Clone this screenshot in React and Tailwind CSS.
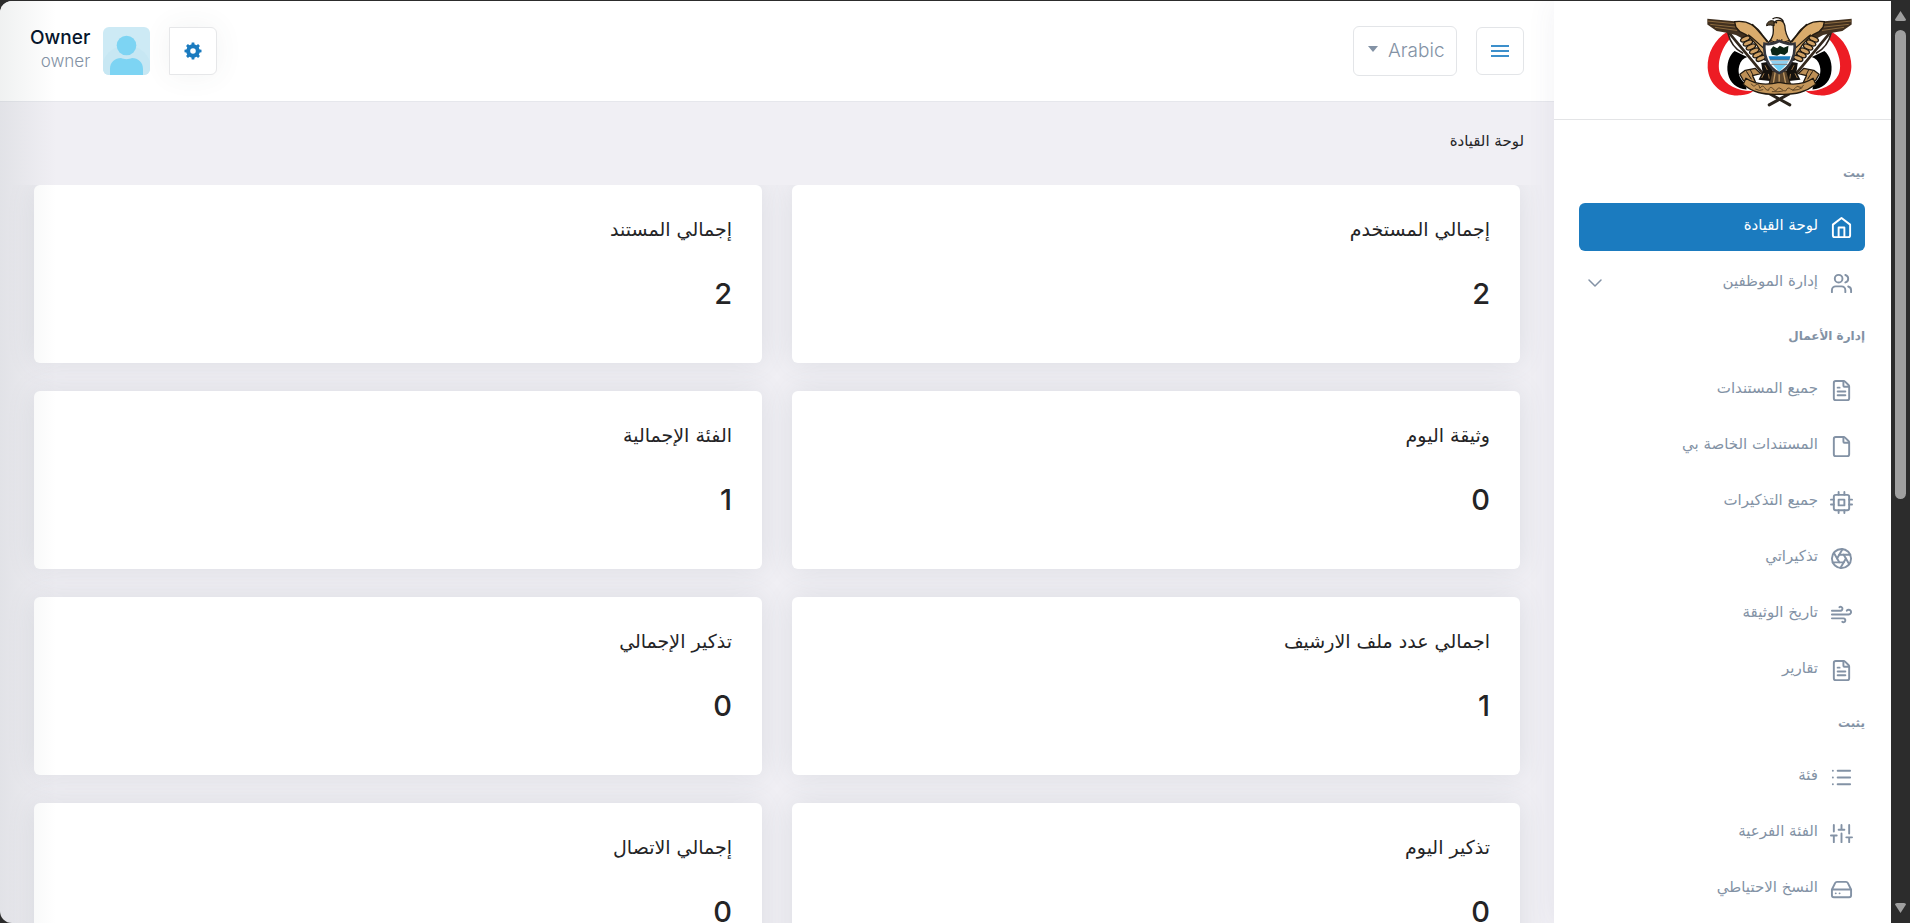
import { useState } from "react";
import { Users, FileText, File, Aperture, Wind, List, ChevronDown } from "lucide-react";

function LineIcon({ size = 23, strokeWidth = 2, children }) {
  return (
    <svg
      width={size}
      height={size}
      viewBox="0 0 24 24"
      fill="none"
      stroke="currentColor"
      strokeWidth={strokeWidth}
      strokeLinecap="round"
      strokeLinejoin="round"
      aria-hidden="true"
    >
      {children}
    </svg>
  );
}

function Sliders(props) {
  return (
    <LineIcon {...props}>
      <path d="M4 21v-7M4 10V3M12 21v-9M12 8V3M20 21v-5M20 12V3M1 14h6M9 8h6M17 16h6" />
    </LineIcon>
  );
}

function Drive(props) {
  return (
    <LineIcon {...props}>
      <path d="M22 12H2M5.45 5.11 2 12v6a2 2 0 0 0 2 2h16a2 2 0 0 0 2-2v-6l-3.45-6.89A2 2 0 0 0 16.76 4H7.24a2 2 0 0 0-1.79 1.11zM6 16h.01M10 16h.01" />
    </LineIcon>
  );
}

function Home(props) {
  return (
    <LineIcon {...props}>
      <path d="m3 9 9-7 9 7v11a2 2 0 0 1-2 2H5a2 2 0 0 1-2-2z" />
      <path d="M9 22V12h6v10" />
    </LineIcon>
  );
}

function Chip(props) {
  return (
    <LineIcon {...props}>
      <rect x="4" y="4" width="16" height="16" rx="2" />
      <path d="M9 9h6v6H9zM9 1v3M15 1v3M9 20v3M15 20v3M20 9h3M20 14h3M1 9h3M1 14h3" />
    </LineIcon>
  );
}

function Bars() {
  return (
    <svg width="18" height="14" viewBox="0 0 18 14" aria-hidden="true">
      <path d="M0 1h18v2H0zM0 6h18v2H0zM0 11h18v2H0z" fill="currentColor" />
    </svg>
  );
}

function Cog() {
  return (
    <svg width="18" height="18" viewBox="0 0 18 18" aria-hidden="true">
      <circle cx="9" cy="9" r="4.8" fill="none" stroke="currentColor" strokeWidth="4" />
      {[0, 45, 90, 135].map((angle) => (
        <path
          key={angle}
          d="M7.300 3.500 7.700 0.500H10.300L10.700 3.500ZM7.300 14.500 7.700 17.500H10.300L10.700 14.500Z"
          transform={`rotate(${angle} 9 9)`}
          fill="currentColor"
        />
      ))}
    </svg>
  );
}

const sections = [
  {
    title: "بيت",
    items: [
      { label: "لوحة القيادة", icon: Home, active: true },
      { label: "إدارة الموظفين", icon: Users, expandable: true },
    ],
  },
  {
    title: "إدارة الأعمال",
    items: [
      { label: "جميع المستندات", icon: FileText },
      { label: "المستندات الخاصة بي", icon: File },
      { label: "جميع التذكيرات", icon: Chip },
      { label: "تذكيراتي", icon: Aperture },
      { label: "تاريخ الوثيقة", icon: Wind },
      { label: "تقارير", icon: FileText },
    ],
  },
  {
    title: "يثبت",
    items: [
      { label: "فئة", icon: List },
      { label: "الفئة الفرعية", icon: Sliders },
      { label: "النسخ الاحتياطي", icon: Drive },
    ],
  },
];

const stats = [
  { label: "إجمالي المستخدم", value: 2 },
  { label: "إجمالي المستند", value: 2 },
  { label: "وثيقة اليوم", value: 0 },
  { label: "الفئة الإجمالية", value: 1 },
  { label: "اجمالي عدد ملف الارشيف", value: 1 },
  { label: "تذكير الإجمالي", value: 0 },
  { label: "تذكير اليوم", value: 0 },
  { label: "إجمالي الاتصال", value: 0 },
];

const wingFeathers = [
  [166, 104],
  [174, 116],
  [183, 128],
  [193, 140],
  [203, 151],
  [213, 162],
];

function EmblemHalf() {
  return (
    <g strokeLinejoin="round" strokeLinecap="round">
      <path d="M112 82C74 104 51 148 53 190C56 244 104 278 152 273C168 271 182 268 190 260C146 262 108 244 92 212C78 180 94 132 120 104Z" fill="#ed1c24" />
      <path d="M134 140C118 152 108 180 114 208C120 236 140 252 170 256L166 236C150 226 142 206 148 184C152 170 160 162 172 158Z" fill="#000" />
      <path d="M114 86C120 112 136 134 158 146" stroke="#2b2119" strokeWidth="5" fill="none" />
      <path d="M118 86L226 216" stroke="#33281d" strokeWidth="8" fill="none" />
      <path d="M52 43L150 52L176 62L196 100L160 104L138 92L106 84L80 80L52 60Z" fill="#41301f" />
      <path d="M54 50L138 58M62 60L136 68M76 69L140 78" stroke="#8c6a3f" strokeWidth="3" fill="none" />
      <path d="M134 52C176 46 200 66 218 92L236 114L226 168L212 140C196 112 176 92 150 82L138 68Z" fill="#d9ab6c" stroke="#221a10" strokeWidth="4" />
      <path d="M188 60C204 76 218 96 232 112M176 92C192 104 206 118 222 132" stroke="#221a10" strokeWidth="4" fill="none" />
      {wingFeathers.map(([x, y]) => (
        <ellipse key={x} cx={x} cy={y} rx="15" ry="7" transform={`rotate(-24 ${x} ${y})`} fill="#cfa064" stroke="#221a10" strokeWidth="4" />
      ))}
      <path d="M214 176L236 172L254 212L240 230L206 226L218 202Z" fill="#15110d" />
      <path d="M226 184l6 12M222 208l-6 12M236 210l2 12" stroke="#9c7647" strokeWidth="3" />
      <path d="M166 198L196 192L212 208L188 214L198 236L160 228L150 210Z" fill="#bd8f56" stroke="#221a10" strokeWidth="4" />
      <path d="M170 202L184 224M182 198L190 214" stroke="#221a10" strokeWidth="3" />
    </g>
  );
}

function Emblem() {
  return (
    <svg viewBox="51 38 436 270" className="h-[90px] w-[145px]" role="img" aria-label="شعار">
      <EmblemHalf />
      <g transform="translate(538 0) scale(-1 1)">
        <EmblemHalf />
      </g>
      <path d="M296 270L238 302M242 270L300 302" stroke="#2b241c" strokeWidth="9" strokeLinecap="round" />
      <path d="M247 200L290 200L304 246L236 246Z" fill="#5b452c" stroke="#1b140c" strokeWidth="3" />
      <path d="M256 204L250 240M268 204V240M281 204L288 240" stroke="#c39a63" strokeWidth="4" />
      <path d="M250 62C254 44 280 42 285 64C286 84 290 96 302 112L270 122L238 112C250 98 252 86 250 70Z" fill="#d9ab6c" stroke="#221a10" strokeWidth="4" strokeLinejoin="round" />
      <path d="M252 50C240 46 230 54 230 64C238 60 246 62 253 64Z" fill="#55452f" stroke="#1b140c" strokeWidth="3" />
      <circle cx="259" cy="54" r="3" fill="#111" />
      <path d="M248 44C258 36 276 40 281 52" stroke="#1b140c" strokeWidth="4" fill="none" />
      <path d="M242 108L268 118L298 108M262 104v10M276 104v10" stroke="#1b140c" strokeWidth="3" fill="none" />
      <path d="M224 118C240 122 256 116 268 110C282 116 298 122 314 118C318 150 304 190 268 206C232 190 220 150 224 118Z" fill="#fff" stroke="#34343a" strokeWidth="8" />
      <path d="M242 136L250 126L262 132L270 124L282 130L296 124L294 144L284 152L272 148L262 154L246 151Z" fill="#0b2415" />
      <path d="M236 156H302L299 166H240Z" fill="#1b7fc0" />
      <path d="M242 170H297L291 178H248Z" fill="#8ed0f2" />
      <path d="M250 182H289L268 202Z" fill="#6fcdf4" />
      <path d="M240 167H299M244 180H293" stroke="#1d2a33" strokeWidth="2" />
      <path d="M168 222C200 244 236 242 268 234C302 242 338 244 370 222L378 240C350 262 320 272 268 270C218 272 188 264 160 240Z" fill="#c4965a" stroke="#221a10" strokeWidth="4" strokeLinejoin="round" />
      <path d="M184 238q6 12 14 4t12 10q8-12 14-2t12 8q4-14 12-6t10 8q8-14 16-6t14 6q6-14 14-6t14-2q6-10 12-4t14-6" stroke="#5c4426" strokeWidth="3" fill="none" />
      <path d="M196 254q14 8 24 2M246 262q20 2 34-2M308 258q20 0 30-8" stroke="#5c4426" strokeWidth="3" fill="none" />
    </svg>
  );
}

function NavItem({ item }) {
  const Icon = item.icon;
  return (
    <li>
      <a
        href="#"
        aria-current={item.active ? "page" : undefined}
        className={
          item.active
            ? "flex h-12 items-center gap-3 rounded-md bg-[#1b7bbf] ps-3 pe-1 text-white"
            : "flex h-12 items-center gap-3 rounded-md ps-3 pe-1 text-[#8392a5]"
        }
      >
        <Icon size={23} strokeWidth={2} />
        <span className="flex-1 pb-1 text-[15px]">{item.label}</span>
        {item.expandable && <ChevronDown size={24} strokeWidth={1.5} />}
      </a>
    </li>
  );
}

function Sidebar() {
  return (
    <aside className="z-10 flex w-[337px] shrink-0 flex-col bg-white shadow-[0_0_28px_rgba(69,65,120,0.07)]">
      <div className="flex h-[119px] shrink-0 items-center border-b border-[#e3e4e6] px-[39px] pt-1">
        <Emblem />
      </div>
      <nav className="ps-[26px] pe-[25px] pt-6">
        {sections.map((section) => (
          <section key={section.title}>
            <h2 className="pt-[17px] pb-[18px] text-xs leading-6 font-bold text-[#8392a5]">{section.title}</h2>
            <ul className="flex flex-col gap-2">
              {section.items.map((item) => (
                <NavItem key={item.label} item={item} />
              ))}
            </ul>
          </section>
        ))}
      </nav>
    </aside>
  );
}

function Header() {
  const [language, setLanguage] = useState("Arabic");
  return (
    <header className="flex h-[101px] shrink-0 items-center justify-between border-b border-[#e6e7ec] bg-white px-[30px]">
      <div className="flex items-center gap-[19px]">
        <button type="button" aria-label="القائمة" className="flex size-12 items-center justify-center rounded-md border border-[#e3e5e8] text-[#3c8fcb]">
          <Bars />
        </button>
        <div className="relative" dir="ltr">
          <select
            aria-label="اللغة"
            value={language}
            onChange={(e) => setLanguage(e.target.value)}
            className="h-[50px] w-[104px] appearance-none rounded-md border border-[#e3e5e8] bg-white pl-[34px] font-['Inter','DejaVu_Sans',sans-serif] text-[19px] font-light text-[#8392a5]"
          >
            <option>Arabic</option>
            <option>English</option>
          </select>
          <svg className="pointer-events-none absolute top-5 left-[14px]" width="12" height="7" viewBox="0 0 12 7" aria-hidden="true">
            <path d="M1 0h10L6 6z" fill="#8392a5" />
          </svg>
        </div>
      </div>
      <div className="flex items-center gap-[19px]">
        <button
          type="button"
          aria-label="الإعدادات"
          className="flex size-12 items-center justify-center rounded-r-md border border-[#e6e7e9] bg-white text-[#1b7bbf] shadow-[0_0_28px_rgba(70,90,90,0.07)]"
        >
          <Cog />
        </button>
        <div className="flex items-center gap-[13px]">
          <svg viewBox="0 0 47 48" className="h-12 w-[47px] rounded-md" aria-hidden="true">
            <rect width="47" height="48" fill="#cdeaf5" />
            <circle cx="23.500" cy="43" r="25" fill="#c7e7f3" />
            <circle cx="23.500" cy="18.500" r="9.800" fill="#7dd4f3" />
            <path d="M7 48V42C7 35 12 31 18 31C21 32.500 26 32.500 29 31C35 31 40 35 40 42V48Z" fill="#7dd4f3" />
          </svg>
          <div className="pb-1 text-right font-['Inter','DejaVu_Sans',sans-serif]" dir="ltr">
            <p className="text-[19px] leading-6 font-medium text-[#06152b]">Owner</p>
            <p className="text-[17px] leading-[22px] font-light text-[#8392a5]">owner</p>
          </div>
        </div>
      </div>
    </header>
  );
}

function StatCard({ stat }) {
  return (
    <article className="h-[178px] rounded-md bg-white px-[30px] pt-[30px] shadow-[0_0_28px_rgba(80,100,110,0.12)]">
      <h3 className="text-[19px] leading-7 text-[#242426]">{stat.label}</h3>
      <p className="mt-[33px] font-['Inter'] text-[29px] leading-9 font-medium text-[#242426]">{stat.value}</p>
    </article>
  );
}

export default function App() {
  return (
    <div dir="rtl" className="flex h-screen overflow-hidden bg-[#2c2c2c] pt-px font-['DejaVu_Sans',sans-serif]">
      <div className="flex w-[19px] shrink-0 flex-col items-center justify-between py-[10px]" aria-hidden="true">
        <svg width="11" height="10" viewBox="0 0 11 10">
          <path d="M5.500 0 11 8.500Q11 10 9 10H2Q0 10 0 8.500Z" fill="#9f9f9f" />
        </svg>
        <div className="mt-[9px] mb-auto h-[52%] w-[11px] rounded-full bg-[#9f9f9f]" />
        <svg width="11" height="10" viewBox="0 0 11 10">
          <path d="M5.500 10 0 1.500Q0 0 2 0H9Q11 0 11 1.500Z" fill="#9f9f9f" />
        </svg>
      </div>
      <div className="relative flex min-w-0 flex-1 overflow-hidden rounded-l-xl bg-[#f0eff4]">
        <Sidebar />
        <div className="flex min-w-0 flex-1 flex-col">
          <Header />
          <main className="flex-1 overflow-hidden">
            <h1 className="flex h-[83px] items-center px-[30px] pb-1 text-[15px] text-[#242426]">لوحة القيادة</h1>
            <div className="grid grid-cols-2 gap-x-[30px] gap-y-7 overflow-hidden px-[34px] pb-8">
              {stats.map((stat) => (
                <StatCard key={stat.label} stat={stat} />
              ))}
            </div>
          </main>
        </div>
        <div className="pointer-events-none absolute inset-y-0 left-0 w-14 bg-linear-to-r from-[#3c5050]/8 to-transparent" />
      </div>
    </div>
  );
}
